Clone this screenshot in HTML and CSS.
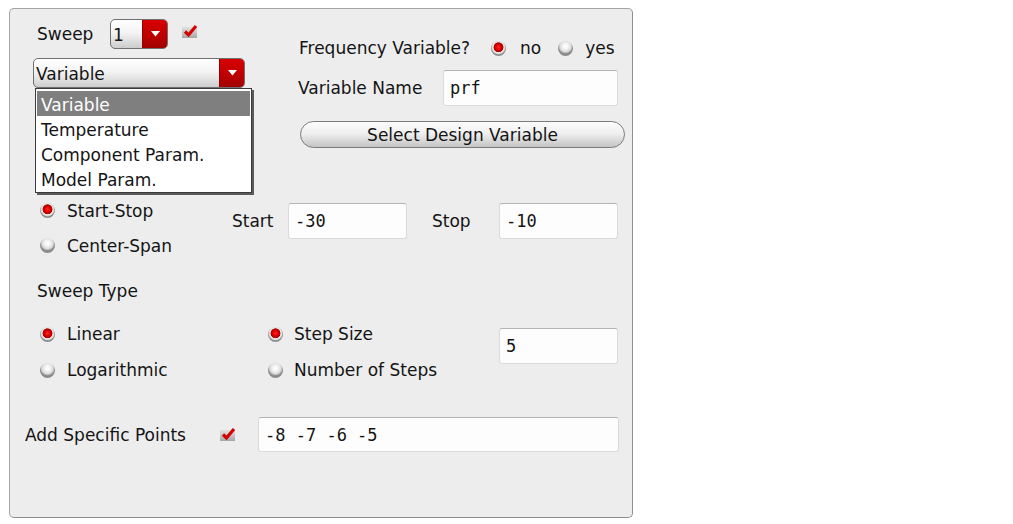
FILE: index.html
```html
<!DOCTYPE html>
<html>
<head>
<meta charset="utf-8">
<link rel="stylesheet" href="styles.css">
</head>
<body>
<div class="panel">
  <div class="top">
    <div class="lcol">
      <div class="sweep-row">
        <span class="lbl sweep-lbl">Sweep</span>
        <div class="combo spin">
          <span class="val">1</span>
          <span class="arrow"><svg width="9" height="6" viewBox="0 0 9 6"><path d="M0 0H9L4.5 5.5Z" fill="#fff"/></svg></span>
        </div>
        <svg class="check check-top" width="17" height="14" viewBox="0 0 17 14"><defs><linearGradient id="cb1" x1="0" y1="0" x2="0" y2="1"><stop offset="0" stop-color="#e2e2e2"/><stop offset="1" stop-color="#a6a6a6"/></linearGradient></defs><rect x="1" y="3" width="15" height="11" fill="url(#cb1)"/><path d="M4 7.5L7.5 11L15 2" fill="none" stroke="#d40000" stroke-width="3.2"/></svg>
      </div>
      <div class="combo-wrap">
        <div class="combo kind">
          <span class="val">Variable</span>
          <span class="arrow"><svg width="9" height="6" viewBox="0 0 9 6"><path d="M0 0H9L4.5 5.5Z" fill="#fff"/></svg></span>
        </div>
        <ul class="menu">
          <li class="sel">Variable</li>
          <li>Temperature</li>
          <li>Component Param.</li>
          <li>Model Param.</li>
        </ul>
      </div>
    </div>
    <div class="rcol">
      <div class="freq-row">
        <span class="lbl">Frequency Variable?</span>
        <span class="radio on r-no"></span><span class="lbl opt-no">no</span>
        <span class="radio r-yes"></span><span class="lbl opt-yes">yes</span>
      </div>
      <div class="vname-row">
        <span class="lbl vname-lbl">Variable Name</span>
        <div class="field vname-field">prf</div>
      </div>
      <div class="btn">Select Design Variable</div>
    </div>
  </div>

  <div class="range">
    <div class="radio-group range-group">
      <div class="ropt"><span class="radio on"></span><span class="lbl">Start-Stop</span></div>
      <div class="ropt"><span class="radio"></span><span class="lbl">Center-Span</span></div>
    </div>
    <div class="startstop">
      <span class="lbl start-lbl">Start</span>
      <div class="field small-field">-30</div>
      <span class="lbl stop-lbl">Stop</span>
      <div class="field small-field">-10</div>
    </div>
  </div>

  <div class="type-title lbl">Sweep Type</div>

  <div class="type">
    <div class="radio-group type-group">
      <div class="ropt"><span class="radio on"></span><span class="lbl">Linear</span></div>
      <div class="ropt"><span class="radio"></span><span class="lbl">Logarithmic</span></div>
    </div>
    <div class="radio-group step-group">
      <div class="ropt"><span class="radio on"></span><span class="lbl">Step Size</span></div>
      <div class="ropt"><span class="radio"></span><span class="lbl">Number of Steps</span></div>
    </div>
    <div class="field small-field step-field">5</div>
  </div>

  <div class="points">
    <span class="lbl points-lbl">Add Specific Points</span>
    <svg class="check" width="17" height="14" viewBox="0 0 17 14"><defs><linearGradient id="cb2" x1="0" y1="0" x2="0" y2="1"><stop offset="0" stop-color="#e2e2e2"/><stop offset="1" stop-color="#a6a6a6"/></linearGradient></defs><rect x="1" y="3" width="15" height="11" fill="url(#cb2)"/><path d="M4 7.5L7.5 11L15 2" fill="none" stroke="#d40000" stroke-width="3.2"/></svg>
    <div class="field points-field">-8 -7 -6 -5</div>
  </div>
</div>
</body>
</html>
```
FILE: styles.css
```css
* { box-sizing: border-box; }
html, body { margin: 0; padding: 0; background: #fff; }
body {
  font-family: "DejaVu Sans", sans-serif;
  font-size: 17px;
  color: #141414;
}
.panel {
  margin: 8px 0 0 9px;
  width: 624px;
  height: 510px;
  border: 1px solid #a4a4a4;
  border-right-color: #8e8e8e;
  border-bottom-color: #8e8e8e;
  border-radius: 5px;
  background: #ededed;
}
.lbl { white-space: nowrap; line-height: 20px; }

.top { display: flex; }
.lcol { margin-left: 23px; width: 212px; }
.sweep-row { display: flex; align-items: center; margin-top: 10px; height: 30px; }
.sweep-lbl { margin-left: 4px; width: 73px; }

.combo {
  display: flex;
  height: 30px;
  border: 1px solid #707070;
  border-radius: 5px;
  overflow: hidden;
  background: linear-gradient(#ffffff 0%, #f4f4f4 45%, #cdcdcd 100%);
}
.combo .val { flex: 1; padding-left: 2px; line-height: 31px; }
.combo .arrow {
  width: 25px;
  display: flex; align-items: center; justify-content: center;
  background: linear-gradient(#d80000, #bc0000 60%, #a00000);
  border-left: 1px solid #900000;
}
.spin { width: 58px; }
.check { display: block; }
.check-top { margin-left: 13px; align-self: flex-start; margin-top: 5px; }

.combo-wrap { position: relative; margin-top: 9px; width: 212px; }
.kind { width: 212px; }
.menu {
  position: absolute;
  top: 30px; left: 2px;
  width: 217px; height: 105px;
  margin: 0; padding: 2px 1px 0 1px;
  list-style: none;
  background: #fff;
  border: 1px solid #3c3c3c;
  box-shadow: 2px 2px 0 #5a5a5a;
  z-index: 2;
}
.menu li { height: 25px; line-height: 28px; overflow: hidden; padding-left: 4px; }
.menu li.sel { background: #7f7f7f; color: #fff; }

.rcol { margin-left: 53px; }
.freq-row { display: flex; align-items: center; margin-top: 27px; height: 24px; padding-left: 1px; }
.r-no { margin-left: 21px; }
.opt-no { margin-left: 14px; }
.r-yes { margin-left: 17px; }
.opt-yes { margin-left: 12px; }

.radio {
  display: inline-block;
  flex: none;
  width: 15px; height: 15px;
  border-radius: 50%;
  background: radial-gradient(circle at 50% 35%, #ffffff 0, #f6f6f6 2.5px, #dcdcdc 5.5px, #b4b4b4 6.6px, #8a8a8a 7.5px);
}
.radio.on {
  background: radial-gradient(circle at 50% 42%, #ff2a2a 0, #e40000 2.5px, #a80000 4.6px, #f4f4f4 5.3px, #d4d4d4 6.4px, #8a8a8a 7.5px);
}

.vname-row { display: flex; align-items: center; margin-top: 10px; height: 36px; }
.vname-lbl { width: 145px; }
.field {
  height: 36px;
  background: #fdfdfd;
  border: 1px solid #dadada;
  border-top-color: #b4b4b4;
  border-radius: 3px;
  font-family: "DejaVu Sans Mono", monospace;
  font-size: 17px;
  line-height: 35px;
  padding-left: 6px;
}
.vname-field { width: 175px; }
.btn {
  margin-top: 15px; margin-left: 2px;
  width: 325px; height: 27px;
  border: 1px solid #7c7c7c;
  border-radius: 14px;
  background: linear-gradient(#fcfcfc 0%, #f0f0f0 45%, #d4d4d4 80%, #c4c4c4 100%);
  text-align: center;
  line-height: 27px;
}

.range { display: flex; margin-top: 45px; }
.radio-group { display: flex; flex-direction: column; }
.ropt { display: flex; align-items: center; height: 35px; }
.ropt .radio { margin-right: 12px; }
.range-group { margin-left: 30px; width: 192px; }
.startstop { display: flex; align-items: center; margin-top: 10px; height: 36px; }
.start-lbl { width: 56px; }
.small-field { width: 119px; }
.stop-lbl { margin-left: 25px; width: 67px; }

.type-title { margin-top: 16px; margin-left: 27px; height: 24px; line-height: 24px; }

.type { display: flex; margin-top: 13px; }
.type .ropt { height: 36px; }
.type-group { margin-left: 30px; width: 228px; }
.step-group { width: 231px; }
.step-group .ropt .radio { margin-right: 11px; }
.step-field { margin-top: 12px; }

.points { display: flex; align-items: center; margin-top: 29px; height: 35px; }
.points-lbl { margin-left: 15px; width: 194px; }
.points .check { margin-top: -2px; }
.points-field { margin-left: 22px; width: 361px; height: 35px; }
```
